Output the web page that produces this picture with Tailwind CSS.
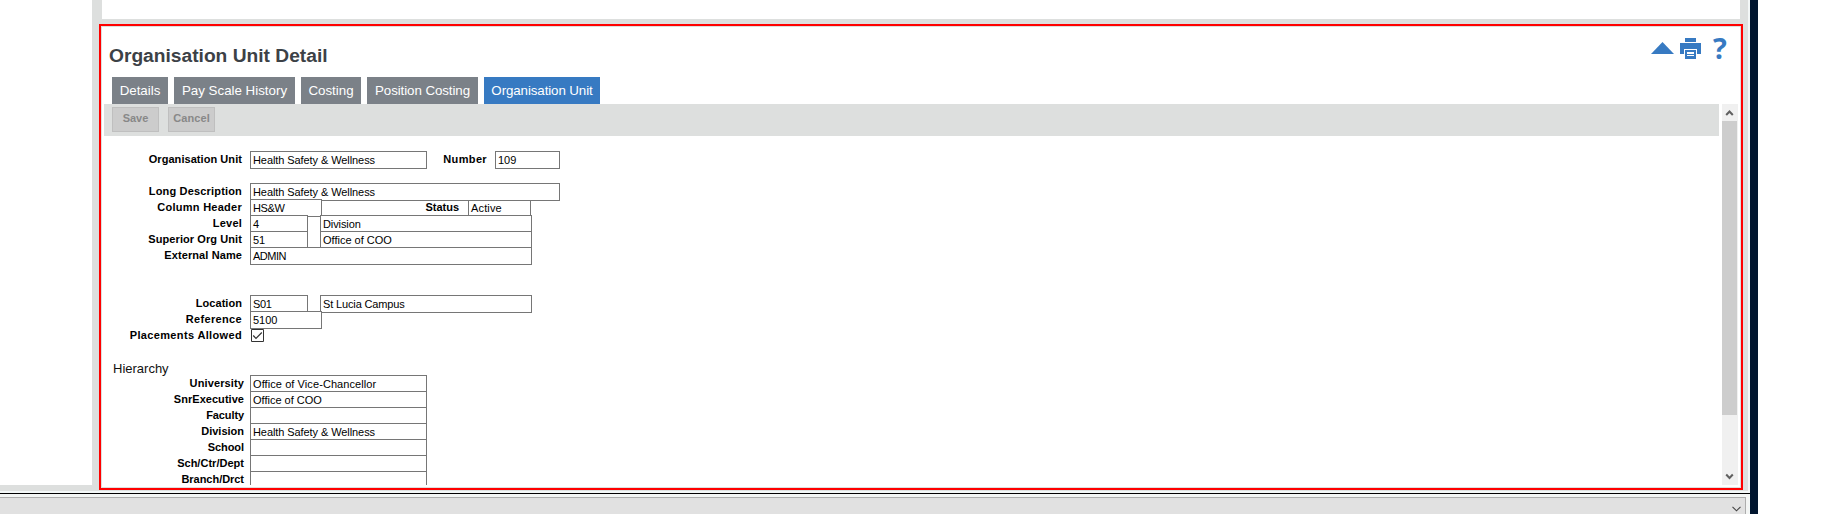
<!DOCTYPE html>
<html lang="en">
<head>
<meta charset="utf-8">
<title>Organisation Unit Detail</title>
<script src="https://cdn.jsdelivr.net/npm/@tailwindcss/browser@4"></script>
</head>
<body class="w-[1842px] h-[514px] overflow-hidden bg-white font-['Liberation_Sans',Arial,sans-serif] text-black flex">
<div class="w-[1750px] h-[514px] flex flex-col bg-[#f3f7f7] shrink-0">
  <div class="w-[1748px] h-[491px] bg-[#dddfde] flex shrink-0">
    <aside class="w-[92px] h-[485px] bg-white shrink-0"></aside>
    <div class="ml-[7px] flex flex-col w-[1644px] shrink-0">
      <div class="ml-[3px] w-[1638px] h-[19px] bg-white shrink-0"></div>
      <main class="mt-[5px] h-[466px] border-2 border-[#ff0000] flex flex-col shrink-0 p-px">
        <div class="flex-1 min-h-0 bg-white flex flex-col">
          <header class="h-[50px] flex justify-between shrink-0 pl-[7px]">
            <h1 class="pt-[17px] text-[19.2px] leading-[24px] font-bold text-[#3c4146] whitespace-nowrap">Organisation Unit Detail</h1>
            <div class="flex pt-[11px] mr-[11px] text-[#377ac2]">
              <svg class="mt-[4px] w-[23px] h-[12px]" viewBox="0 0 23 12" fill="currentColor"><path d="M11.5 0 23 12H0z"/></svg>
              <svg class="ml-[6px] w-[21px] h-[21px]" viewBox="0 0 21 21" fill="currentColor" shape-rendering="crispEdges"><path d="M5 0h11v4H5zM0 5h21v11h-4v-5H4v5H0zM5 12h11v9H5zM7 14v2h7v-2zM7 17v1h7v-1z" fill-rule="evenodd"/></svg>
              <span class="ml-[12px] w-[16px] h-[21px] text-[29px] leading-[20px] font-bold font-['Open_Sans',sans-serif]">?</span>
            </div>
          </header>
          <nav class="flex gap-[6px] h-[27px] pl-[10px] text-[13.33px] leading-[27px] text-white text-center whitespace-nowrap shrink-0">
            <a class="w-[56px] bg-[#7b8188]">Details</a>
            <a class="w-[121px] bg-[#7b8188]">Pay Scale History</a>
            <a class="w-[60px] bg-[#7b8188]">Costing</a>
            <a class="w-[111px] bg-[#7b8188] tracking-[-0.08px]">Position Costing</a>
            <a class="w-[116px] bg-[#377ac2] tracking-[-0.1px]">Organisation Unit</a>
          </nav>
          <div class="flex h-[381px] pl-[2px] shrink-0">
            <div class="w-[1615px] flex flex-col overflow-hidden">
              <div class="h-[32px] bg-[#dddfde] flex gap-[9px] pl-[8px] pt-[3px] shrink-0 text-[11px] font-bold text-[#888888]">
                <button class="w-[47px] h-[25px] border border-[#bfbfbf] bg-[#cccccc] leading-[21px] pb-[2px]">Save</button>
                <button class="w-[47px] h-[25px] border border-[#bfbfbf] bg-[#cccccc] leading-[21px] pb-[2px] tracking-[0.1px]">Cancel</button>
              </div>
              <form class="pt-[15px] flex flex-col text-[11px] leading-[16px] whitespace-nowrap">
                <div class="flex h-[32px]">
                  <label class="w-[138px] mr-[8px] text-right font-bold tracking-[0.06px]">Organisation Unit</label>
                  <div class="w-[177px] h-[18px] bg-white border border-[#767676] pl-[2px] tracking-[-0.08px]">Health Safety &amp; Wellness</div>
                  <label class="w-[60px] mr-[8px] text-right font-bold tracking-[0.35px]">Number</label>
                  <div class="w-[65px] h-[18px] bg-white border border-[#767676] pl-[2px]">109</div>
                </div>
                <div class="flex h-[16px]">
                  <label class="w-[138px] mr-[8px] text-right font-bold tracking-[0.17px]">Long Description</label>
                  <div class="w-[310px] h-[18px] bg-white border border-[#767676] pl-[2px] tracking-[-0.08px]">Health Safety &amp; Wellness</div>
                </div>
                <div class="flex h-[16px]">
                  <label class="w-[138px] mr-[8px] text-right font-bold tracking-[0.26px]">Column Header</label>
                  <div class="w-[72px] h-[18px] bg-white border border-[#767676] pl-[2px] tracking-[-0.4px]">HS&amp;W</div>
                  <label class="w-[137px] mr-[9px] text-right font-bold">Status</label>
                  <div class="mt-[2px] w-[63px] h-[15px] border-x border-[#767676] pl-[2px] leading-[14px] tracking-[0.15px]">Active</div>
                </div>
                <div class="flex h-[16px]">
                  <label class="w-[138px] mr-[8px] text-right font-bold tracking-[0.2px]">Level</label>
                  <div class="w-[58px] h-[18px] bg-white border border-[#767676] pl-[2px]">4</div>
                  <div class="ml-[12px] w-[212px] h-[18px] bg-white border border-[#767676] pl-[2px] tracking-[-0.1px]">Division</div>
                </div>
                <div class="flex h-[16px]">
                  <label class="w-[138px] mr-[8px] text-right font-bold tracking-[0.08px]">Superior Org Unit</label>
                  <div class="w-[58px] h-[18px] bg-white border border-[#767676] pl-[2px]">51</div>
                  <div class="ml-[12px] w-[212px] h-[18px] bg-white border border-[#767676] pl-[2px]">Office of COO</div>
                </div>
                <div class="flex h-[48px]">
                  <label class="w-[138px] mr-[8px] text-right font-bold tracking-[0.1px]">External Name</label>
                  <div class="w-[282px] h-[18px] bg-white border border-[#767676] pl-[2px] tracking-[-0.48px]">ADMIN</div>
                </div>
                <div class="flex h-[16px]">
                  <label class="w-[138px] mr-[8px] text-right font-bold tracking-[0.05px]">Location</label>
                  <div class="w-[58px] h-[18px] bg-white border border-[#767676] pl-[2px] tracking-[-0.3px]">S01</div>
                  <div class="ml-[12px] w-[212px] h-[18px] bg-white border border-[#767676] pl-[2px] tracking-[-0.14px]">St Lucia Campus</div>
                </div>
                <div class="flex h-[16px]">
                  <label class="w-[138px] mr-[8px] text-right font-bold tracking-[0.34px]">Reference</label>
                  <div class="w-[72px] h-[18px] bg-white border border-[#767676] pl-[2px]">5100</div>
                </div>
                <div class="flex h-[32px]">
                  <label class="w-[138px] mr-[9px] text-right font-bold tracking-[0.35px]">Placements Allowed</label>
                  <svg class="mt-[2px] w-[13px] h-[13px]" viewBox="0 0 13 13" fill="none"><path d="M.5.5h12v12H.5z" fill="#fff" stroke="#333"/><path d="M2.200 6.500 5 9.300 10.800 3.500" stroke="#333" stroke-width="1.200"/></svg>
                </div>
                <div class="h-[16px] pl-[9px] text-[13px] leading-[20px] text-[#111111]">Hierarchy</div>
                <div class="flex h-[16px]">
                  <label class="w-[140px] mr-[6px] text-right font-bold tracking-[0.12px]">University</label>
                  <div class="w-[177px] h-[18px] bg-white border border-[#767676] pl-[2px] tracking-[0.08px]">Office of Vice-Chancellor</div>
                </div>
                <div class="flex h-[16px]">
                  <label class="w-[140px] mr-[6px] text-right font-bold tracking-[0.04px]">SnrExecutive</label>
                  <div class="w-[177px] h-[18px] bg-white border border-[#767676] pl-[2px]">Office of COO</div>
                </div>
                <div class="flex h-[16px]">
                  <label class="w-[140px] mr-[6px] text-right font-bold tracking-[-0.1px]">Faculty</label>
                  <div class="w-[177px] h-[18px] bg-white border border-[#767676]"></div>
                </div>
                <div class="flex h-[16px]">
                  <label class="w-[140px] mr-[6px] text-right font-bold">Division</label>
                  <div class="w-[177px] h-[18px] bg-white border border-[#767676] pl-[2px] tracking-[-0.08px]">Health Safety &amp; Wellness</div>
                </div>
                <div class="flex h-[16px]">
                  <label class="w-[140px] mr-[6px] text-right font-bold tracking-[-0.05px]">School</label>
                  <div class="w-[177px] h-[18px] bg-white border border-[#767676]"></div>
                </div>
                <div class="flex h-[16px]">
                  <label class="w-[140px] mr-[6px] text-right font-bold tracking-[0.02px]">Sch/Ctr/Dept</label>
                  <div class="w-[177px] h-[18px] bg-white border border-[#767676]"></div>
                </div>
                <div class="flex h-[16px]">
                  <label class="w-[140px] mr-[6px] text-right font-bold tracking-[-0.04px]">Branch/Drct</label>
                  <div class="w-[177px] h-[18px] bg-white border border-[#767676]"></div>
                </div>
              </form>
            </div>
            <div class="ml-[3px] w-[16px] bg-[#f0f0f0] flex flex-col shrink-0">
              <svg class="w-[16px] h-[17px]" viewBox="0 0 16 17" fill="none" stroke="#606060" stroke-width="2"><path d="m4.200 11 3.300-3.500L10.800 11"/></svg>
              <div class="w-[15px] h-[294px] bg-[#cdcdcd]"></div>
              <svg class="mt-[53px] w-[16px] h-[17px]" viewBox="0 0 16 17" fill="none" stroke="#606060" stroke-width="2"><path d="m4.200 6.500 3.300 3.500 3.300-3.500"/></svg>
            </div>
          </div>
        </div>
      </main>
    </div>
  </div>
  <div class="mt-[2px] h-px w-full bg-black shrink-0"></div>
  <div class="h-[20px] w-[1749px] bg-[#f3f5f4] pt-[3px] shrink-0">
    <div class="h-[17px] w-[1746px] bg-[#e1e1e1] border-t border-r border-[#adadad] flex justify-end pr-[4px]">
      <svg class="mt-[8px] w-[9px] h-[6px]" viewBox="0 0 9 6" fill="none" stroke="#444" stroke-width="1.100"><path d="m.5.800 4 4 4-4"/></svg>
    </div>
  </div>
</div>
<div class="w-[8px] h-[514px] bg-[#00152e] shrink-0"></div>
</body>
</html>
